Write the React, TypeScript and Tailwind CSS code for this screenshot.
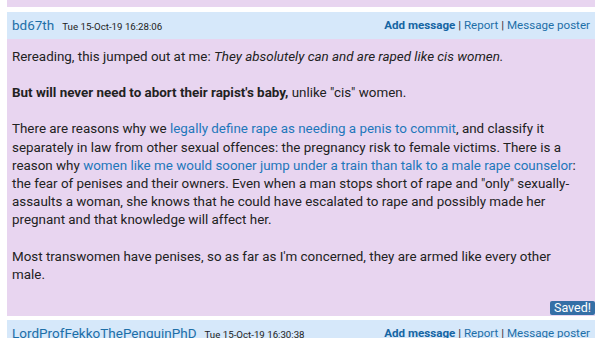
import React from "react";

const Header = ({ name, date }: { name: string; date: string }) => (
  <div className="flex items-center justify-between h-[27px] bg-[#d6e8fa] px-[5px]">
    <div className="flex items-baseline gap-[8px]">
      <span className="text-[13.5px] text-[#1d6fa8]">{name}</span>
      <span className="text-[9.7px] text-[#222]">{date}</span>
    </div>
    <div className="text-[11.6px] text-[#1d6fa8] whitespace-nowrap">
      <span className="font-bold text-[#1565a3]">Add message</span>
      <span className="text-[#333]"> | </span>
      <span>Report</span>
      <span className="text-[#333]"> | </span>
      <span>Message poster</span>
    </div>
  </div>
);

const A = ({ children }: { children: React.ReactNode }) => (
  <a className="text-[#1e77bb]">{children}</a>
);

export default function App() {
  return (
    <div
      className="bg-white w-[600px] h-[338px] overflow-hidden pl-[7px] pr-[5px] flex flex-col"
      style={{ fontFamily: "Roboto, 'Liberation Sans', sans-serif" }}
    >
      <div className="h-[7px] bg-[#e8d5f0] shrink-0" />
      <div className="mt-[5px] shrink-0">
        <Header name="bd67th" date="Tue 15-Oct-19 16:28:06" />
        <div className="bg-[#e8d5f0] h-[277px] relative pl-[5px] pr-[10px] pt-[9px] text-[13.4px] leading-[18.2px] text-[#222] flex flex-col gap-[18px]">
          <p>
            Rereading, this jumped out at me: <i>They absolutely can and are raped like cis women.</i>
          </p>
          <p>
            <b>But will never need to abort their rapist's baby,</b> unlike "cis" women.
          </p>
          <p>
            There are reasons why we <A>legally define rape as needing a penis to commit</A>, and classify it
            separately in law from other sexual offences: the pregnancy risk to female victims. There is a
            reason why <A>women like me would sooner jump under a train than talk to a male rape counselor</A>:
            the fear of penises and their owners. Even when a man stops short of rape and "only" sexually-assaults
            a woman, she knows that he could have escalated to rape and possibly made her pregnant and that
            knowledge will affect her.
          </p>
          <p>
            Most transwomen have penises, so as far as I'm concerned, they are armed like every other male.
          </p>
          <span className="absolute right-0 bottom-[1px] bg-[#356fa6] text-white text-[12.5px] leading-[14px] px-[4px] h-[14px] rounded-[2px]">
            Saved!
          </span>
        </div>
      </div>
      <div className="mt-[4px] shrink-0">
        <Header name="LordProfFekkoThePenguinPhD" date="Tue 15-Oct-19 16:30:38" />
      </div>
    </div>
  );
}
